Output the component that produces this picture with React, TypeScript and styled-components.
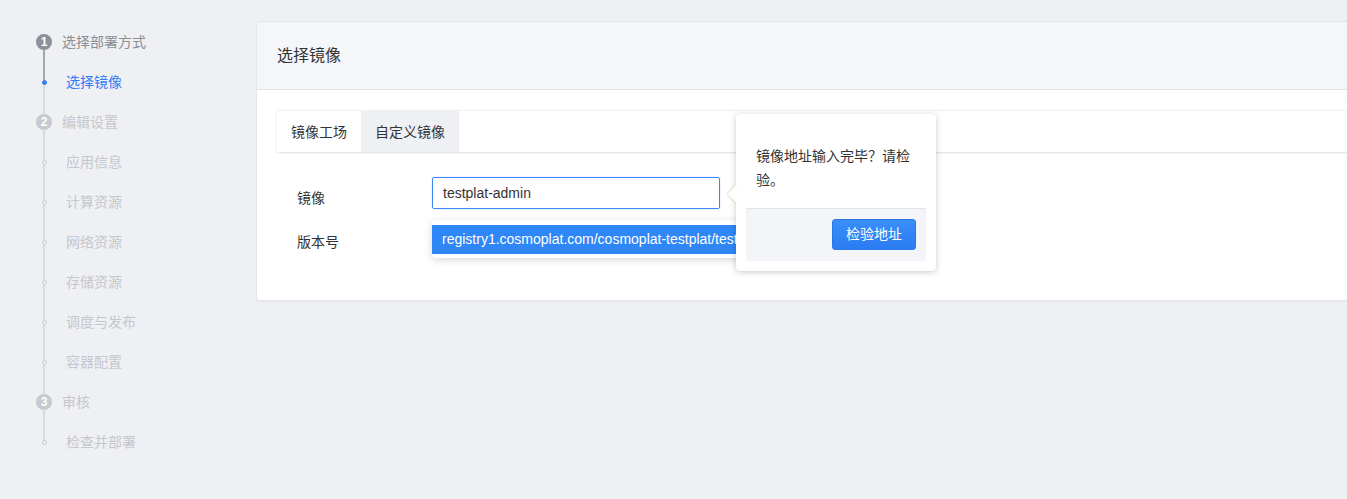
import React from "react";
import styled, { createGlobalStyle } from "styled-components";

const Global = createGlobalStyle`
  html, body { margin: 0; padding: 0; background: #eff0f4; }
  body {
    font-family: "Liberation Sans", "Noto Sans CJK SC", sans-serif;
    font-size: 14px;
    color: #333;
    overflow: hidden;
  }
  #root { height: 499px; }
`;

const Page = styled.div`
  display: flex;
  height: 499px;
  padding-top: 21px;
  box-sizing: border-box;
  overflow: hidden;
`;

const Sidebar = styled.div`
  width: 256px;
  flex: none;
  padding: 1px 0 0 36px;
  box-sizing: border-box;
  display: flex;
  flex-direction: column;
`;

const Row = styled.div`
  display: flex;
  align-items: stretch;
  height: 40px;
`;

const Rail = styled.div`
  width: 16px;
  display: flex;
  flex-direction: column;
  align-items: center;
`;

const Seg = styled.div<{ $c?: string }>`
  flex: 1;
  width: 2px;
  background: ${(p) => p.$c || "transparent"};
`;

const Circle = styled.div<{ $done: boolean }>`
  width: 16px;
  height: 16px;
  border-radius: 50%;
  flex: none;
  background: ${(p) => (p.$done ? "#8d9199" : "#c7cad0")};
  color: #fff;
  font-size: 12px;
  font-weight: bold;
  line-height: 16px;
  text-align: center;
  font-family: "Liberation Sans", sans-serif;
`;

const Dot = styled.div<{ $active: boolean }>`
  flex: none;
  box-sizing: border-box;
  width: 5px;
  height: 5px;
  border-radius: 50%;
  background: ${(p) => (p.$active ? "#2f7cf6" : "#eff0f4")};
  border: 1px solid ${(p) => (p.$active ? "#2f7cf6" : "#c7cad0")};
`;

const StepLabel = styled.div<{ $color: string; $sub: boolean }>`
  display: flex;
  align-items: center;
  padding-left: ${(p) => (p.$sub ? 14 : 10)}px;
  padding-bottom: 3px;
  color: ${(p) => p.$color};
  font-size: 14px;
`;

const Panel = styled.div`
  flex: 1;
  margin-right: -20px;
  align-self: flex-start;
  background: #fff;
  border: 1px solid #e3e5e9;
  border-radius: 3px;
  box-shadow: 0 1px 2px rgba(0, 0, 0, 0.04);
`;

const Header = styled.div`
  height: 68px;
  box-sizing: border-box;
  padding-bottom: 3px;
  background: #f5f6f9;
  border-bottom: 1px solid #e1e3e8;
  display: flex;
  align-items: center;
  padding-left: 20px;
  font-size: 16px;
  color: #333;
`;

const Body = styled.div`
  padding: 20px 0 47px 20px;
`;

const Tabs = styled.div`
  display: flex;
  height: 41px;
  border-top: 1px solid #f0f1f4;
  box-shadow: 0 1px 2px rgba(0, 0, 0, 0.12);
  background: #fff;
`;

const Tab = styled.div<{ $active: boolean }>`
  padding: 0 14px 2px;
  display: flex;
  align-items: center;
  background: ${(p) => (p.$active ? "#fff" : "#eff0f4")};
  color: #333;
  font-size: 14px;
`;

const Form = styled.div`
  margin-top: 25px;
  padding-left: 20px;
  display: flex;
  flex-direction: column;
  gap: 12px;
`;

const FormRow = styled.div`
  display: flex;
  align-items: flex-start;
  height: 32px;
`;

const Label = styled.div`
  width: 135px;
  line-height: 32px;
  padding-top: 5px;
  color: #333;
  font-size: 14px;
`;

const Field = styled.div`
  position: relative;
  width: 288px;
`;

const Input = styled.div`
  height: 32px;
  box-sizing: border-box;
  border: 1px solid #3b89f7;
  border-radius: 2px;
  box-shadow: 0 0 2px rgba(47, 124, 246, 0.3);
  padding-left: 10px;
  line-height: 30px;
  font-size: 14px;
  color: #333;
`;

const Dropdown = styled.div`
  position: absolute;
  left: 0;
  top: calc(100% + 11px);
  width: max-content;
  padding: 5px 0 4px;
  background: #fff;
  border-radius: 4px;
  box-shadow: 0 2px 8px rgba(0, 0, 0, 0.16);
  z-index: 2;
`;

const Option = styled.div`
  height: 29px;
  line-height: 29px;
  padding: 0 10px;
  background: #2f86f6;
  color: #fff;
  font-size: 14px;
  white-space: nowrap;
`;

const Popover = styled.div`
  position: absolute;
  left: calc(100% + 16px);
  top: -63px;
  width: 200px;
  box-sizing: border-box;
  background: #fff;
  border-radius: 4px;
  box-shadow: 0 1px 6px rgba(0, 0, 0, 0.22);
  padding: 30px 10px 10px;
  z-index: 3;

  &::before {
    content: "";
    position: absolute;
    left: -6px;
    top: 74px;
    width: 12px;
    height: 12px;
    background: #fff;
    transform: rotate(45deg);
    box-shadow: -1px 1px 2px rgba(0, 0, 0, 0.12);
  }
`;

const PopText = styled.div`
  position: relative;
  padding: 0 10px;
  line-height: 24px;
  font-size: 14px;
  color: #333;
`;

const PopFooter = styled.div`
  position: relative;
  margin-top: 16px;
  background: #f4f5f9;
  border-top: 1px solid #e2e4e8;
  padding: 10px 10px 11px;
  display: flex;
  justify-content: flex-end;
`;

const Button = styled.div`
  height: 31px;
  box-sizing: border-box;
  padding: 0 13px;
  line-height: 29px;
  border: 1px solid #2a77ea;
  border-radius: 3px;
  background: linear-gradient(#3a8ff8, #2b7bf2);
  color: #fff;
  font-size: 14px;
`;

type Item =
  | { kind: "step"; n: number; label: string; done: boolean }
  | { kind: "sub"; label: string; active: boolean };

const items: Item[] = [
  { kind: "step", n: 1, label: "选择部署方式", done: true },
  { kind: "sub", label: "选择镜像", active: true },
  { kind: "step", n: 2, label: "编辑设置", done: false },
  { kind: "sub", label: "应用信息", active: false },
  { kind: "sub", label: "计算资源", active: false },
  { kind: "sub", label: "网络资源", active: false },
  { kind: "sub", label: "存储资源", active: false },
  { kind: "sub", label: "调度与发布", active: false },
  { kind: "sub", label: "容器配置", active: false },
  { kind: "step", n: 3, label: "审核", done: false },
  { kind: "sub", label: "检查并部署", active: false },
];

const DARK = "#a3a6ad";
const LIGHT = "#d8dae0";

export default function App() {
  return (
    <>
      <Global />
      <Page>
        <Sidebar>
          {items.map((it, i) => {
            const top = i === 0 ? undefined : i === 1 ? DARK : LIGHT;
            const bottom = i === items.length - 1 ? undefined : i === 0 ? DARK : LIGHT;
            let color = "#c4c7cd";
            if (it.kind === "step" && it.done) color = "#8a8e96";
            if (it.kind === "sub" && it.active) color = "#2f7cf6";
            return (
              <Row key={i}>
                <Rail>
                  <Seg $c={top} />
                  {it.kind === "step" ? (
                    <Circle $done={it.done}>{it.n}</Circle>
                  ) : (
                    <Dot $active={it.active} />
                  )}
                  <Seg $c={bottom} />
                </Rail>
                <StepLabel $color={color} $sub={it.kind === "sub"}>
                  {it.label}
                </StepLabel>
              </Row>
            );
          })}
        </Sidebar>
        <Panel>
          <Header>选择镜像</Header>
          <Body>
            <Tabs>
              <Tab $active>镜像工场</Tab>
              <Tab $active={false}>自定义镜像</Tab>
            </Tabs>
            <Form>
              <FormRow>
                <Label>镜像</Label>
                <Field>
                  <Input>testplat-admin</Input>
                  <Dropdown>
                    <Option>registry1.cosmoplat.com/cosmoplat-testplat/testplat-admin</Option>
                  </Dropdown>
                  <Popover>
                    <PopText>镜像地址输入完毕？请检验。</PopText>
                    <PopFooter>
                      <Button>检验地址</Button>
                    </PopFooter>
                  </Popover>
                </Field>
              </FormRow>
              <FormRow>
                <Label>版本号</Label>
              </FormRow>
            </Form>
          </Body>
        </Panel>
      </Page>
    </>
  );
}
